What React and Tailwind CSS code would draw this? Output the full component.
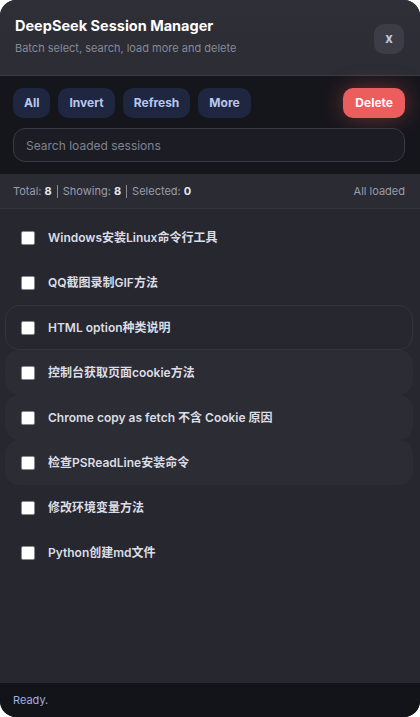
import { useState } from 'react'

const SESSIONS = [
  { id: 1, title: 'Windows安装Linux命令行工具' },
  { id: 2, title: 'QQ截图录制GIF方法' },
  { id: 3, title: 'HTML option种类说明', hover: true },
  { id: 4, title: '控制台获取页面cookie方法', fade: true },
  { id: 5, title: 'Chrome copy as fetch 不含 Cookie 原因', fade: true },
  { id: 6, title: '检查PSReadLine安装命令', fade: true },
  { id: 7, title: '修改环境变量方法' },
  { id: 8, title: 'Python创建md文件' },
]

function ToolButton({ children }) {
  return (
    <button className="h-[30px] px-[11px] rounded-[10px] bg-[#1f2640] text-[#b9c7ee] text-[12px] font-bold leading-none">
      {children}
    </button>
  )
}

export default function App() {
  const [selected, setSelected] = useState([])
  const [query, setQuery] = useState('')

  const shown = SESSIONS.filter(s => s.title.toLowerCase().includes(query.toLowerCase()))

  function toggle(id) {
    setSelected(prev => prev.includes(id) ? prev.filter(x => x !== id) : [...prev, id])
  }

  return (
    <div className="w-[420px] h-[717px] bg-white" style={{ fontFamily: 'Inter, "Noto Sans CJK SC", sans-serif' }}>
      <div className="h-full flex flex-col rounded-[16px] overflow-hidden bg-[#26272f]">
        <div className="h-[76px] shrink-0 flex items-center justify-between pl-[15px] pr-[16px] bg-gradient-to-b from-[#2e2f37] to-[#2b2c34] border-b border-[#3b3c44]">
          <div className="flex flex-col gap-[9px] -mt-[2px]">
            <div className="text-[14.5px] font-bold text-white leading-none">DeepSeek Session Manager</div>
            <div className="text-[11px] text-[#868a98] leading-none">Batch select, search, load more and delete</div>
          </div>
          <button className="w-[30px] h-[30px] mt-[2px] rounded-[10px] bg-[#3c3d46] text-[#c6c9d6] text-[13px] font-bold leading-none">x</button>
        </div>

        <div className="shrink-0 bg-[#15161c] pl-[13px] pr-[15px] pt-[12px] pb-[12px] flex flex-col gap-[10px]">
          <div className="flex items-center gap-[8px]">
            <ToolButton>All</ToolButton>
            <ToolButton>Invert</ToolButton>
            <ToolButton>Refresh</ToolButton>
            <ToolButton>More</ToolButton>
            <button className="ml-auto h-[30px] px-[12px] rounded-[10px] bg-[#ec5d5e] text-white text-[12px] font-bold leading-none shadow-[0_0_22px_rgba(236,93,94,0.4)]">
              Delete
            </button>
          </div>
          <input
            value={query}
            onChange={e => setQuery(e.target.value)}
            placeholder="Search loaded sessions"
            className="h-[34px] w-full rounded-[12px] bg-[#1c1d24] border border-[#393a43] px-[12px] text-[12px] text-[#e0e1e8] placeholder:text-[#80838f] outline-none"
          />
        </div>

        <div className="shrink-0 h-[35px] flex items-center justify-between pl-[13px] pr-[15px] bg-[#2a2b33] border-b border-[#34353d] text-[11px] text-[#9a9dab]">
          <div className="flex items-center">
            <span>Total: <b className="text-[#e6e7ee]">{SESSIONS.length}</b></span>
            <span className="mx-[5px] w-px h-[13px] bg-[#8b8e9a]" />
            <span>Showing: <b className="text-[#e6e7ee]">{shown.length}</b></span>
            <span className="mx-[5px] w-px h-[13px] bg-[#8b8e9a]" />
            <span>Selected: <b className="text-[#e6e7ee]">{selected.length}</b></span>
          </div>
          <span>All loaded</span>
        </div>

        <div className="flex-1 pt-[6px] pl-[5px] pr-[7px] flex flex-col">
          {shown.map(s => (
            <label
              key={s.id}
              className={
                'h-[45px] flex items-center gap-[13px] pl-[15px] rounded-[14px] cursor-pointer ' +
                (s.hover ? 'border border-[#33343c]' : s.fade ? 'bg-[#2b2c34] border border-transparent' : 'border border-transparent')
              }
            >
              <input
                type="checkbox"
                checked={selected.includes(s.id)}
                onChange={() => toggle(s.id)}
                className="appearance-none w-[14px] h-[14px] shrink-0 rounded-[2px] bg-white border border-[#8a8a8a] checked:bg-[#4f6bed]"
              />
              <span className="text-[12px] font-semibold text-[#dcdde5]">{s.title}</span>
            </label>
          ))}
        </div>

        <div className="shrink-0 h-[34px] flex items-center px-[13px] bg-[#131419] text-[11px] text-[#9eb0e2]">
          Ready.
        </div>
      </div>
    </div>
  )
}
